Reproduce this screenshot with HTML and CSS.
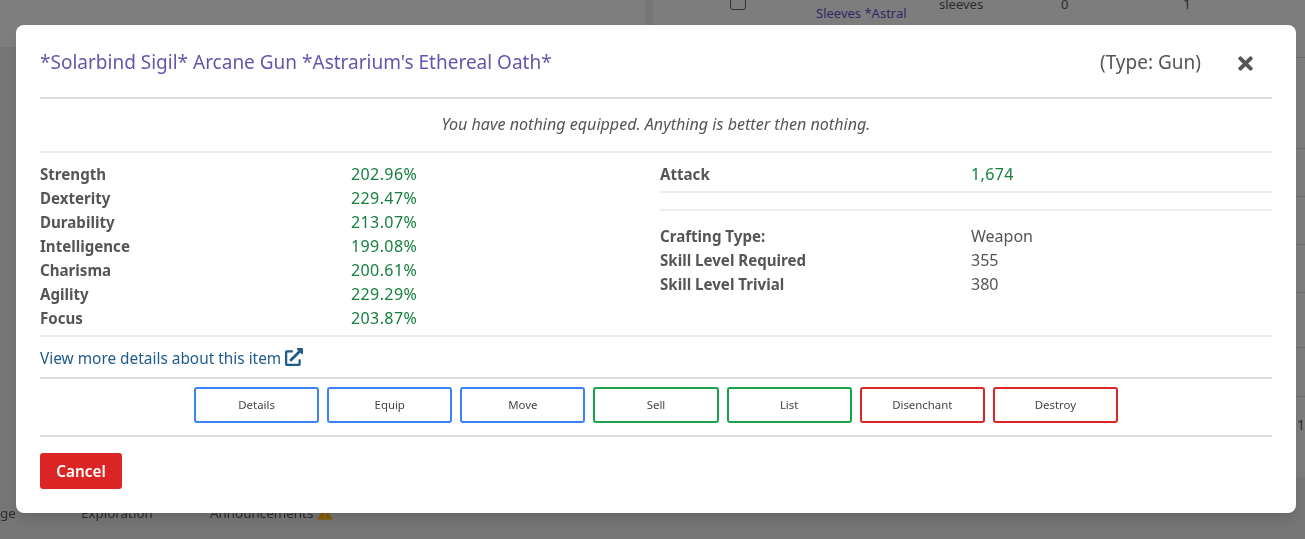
FILE: index.html
```html
<!DOCTYPE html>
<html lang="en">
<head>
<meta charset="utf-8">
<title>Item</title>
<link rel="stylesheet" href="styles.css">
</head>
<body>
<div class="page">
  <div class="bg-top"></div>
  <div class="bg-panel">
    <div class="bg-row r1"></div>
    <div class="bg-row r2"></div>
    <div class="bg-row r3"></div>
    <div class="bg-row r3"></div>
    <div class="bg-row r3"></div>
    <div class="bg-row r4"></div>
    <div class="bg-row r5"></div>
  </div>
  <span class="bg-check"></span>
  <span class="bg-text bg-link">Sleeves *Astral</span>
  <span class="bg-text bg-sleeves">sleeves</span>
  <span class="bg-text bg-zero">0</span>
  <span class="bg-text bg-one">1</span>
  <span class="bg-text bg-edge">10</span>
  <span class="bg-text bg-ge">ge</span>
  <span class="bg-text bg-explore">Exploration</span>
  <span class="bg-text bg-announce">Announcements
    <svg class="bg-warn" viewBox="0 0 16 14"><path d="M8 0.5 L15.6 13.5 H0.4 Z" fill="#8a5a00"/><rect x="7.2" y="5" width="1.6" height="4.5" fill="#777"/><rect x="7.2" y="10.5" width="1.6" height="1.6" fill="#777"/></svg>
  </span>
</div>
<section class="modal">
  <header class="modal-head">
    <h2 class="title">*Solarbind Sigil* Arcane Gun *Astrarium's Ethereal Oath*</h2>
    <span class="type">(Type: Gun)</span>
    <svg class="close" viewBox="0 0 352 512"><path fill="currentColor" d="M242.72 256l100.07-100.07c12.28-12.28 12.28-32.19 0-44.48l-22.24-22.24c-12.28-12.28-32.19-12.28-44.48 0L176 189.28 75.93 89.21c-12.28-12.28-32.19-12.28-44.48 0L9.21 111.45c-12.28 12.28-12.28 32.19 0 44.48L109.28 256 9.21 356.07c-12.28 12.28-12.28 32.19 0 44.48l22.24 22.24c12.28 12.28 32.2 12.28 44.48 0L176 322.72l100.07 100.07c12.28 12.28 32.2 12.28 44.48 0l22.24-22.24c12.28-12.28 12.28-32.19 0-44.48L242.72 256z"/></svg>
  </header>
  <hr class="rule rule-strong">
  <p class="note">You have nothing equipped. Anything is better then nothing.</p>
  <hr class="rule">
  <div class="columns">
    <dl class="stats">
      <dt>Strength</dt><dd class="good">202.96%</dd>
      <dt>Dexterity</dt><dd class="good">229.47%</dd>
      <dt>Durability</dt><dd class="good">213.07%</dd>
      <dt>Intelligence</dt><dd class="good">199.08%</dd>
      <dt>Charisma</dt><dd class="good">200.61%</dd>
      <dt>Agility</dt><dd class="good">229.29%</dd>
      <dt>Focus</dt><dd class="good">203.87%</dd>
    </dl>
    <div>
      <dl class="stats">
        <dt>Attack</dt><dd class="good">1,674</dd>
      </dl>
      <hr class="rule rule-a">
      <hr class="rule rule-b">
      <dl class="stats">
        <dt>Crafting Type:</dt><dd>Weapon</dd>
        <dt>Skill Level Required</dt><dd>355</dd>
        <dt>Skill Level Trivial</dt><dd>380</dd>
      </dl>
    </div>
  </div>
  <hr class="rule">
  <a class="more" href="#">View more details about this item
    <svg class="ext" viewBox="0 0 512 512"><path fill="currentColor" d="M432 320h-32a16 16 0 0 0-16 16v112H64V128h144a16 16 0 0 0 16-16V80a16 16 0 0 0-16-16H48a48 48 0 0 0-48 48v352a48 48 0 0 0 48 48h352a48 48 0 0 0 48-48V336a16 16 0 0 0-16-16zM488 0H360c-21.37 0-32.05 25.91-17 41l35.73 35.73L135 320.37a24 24 0 0 0 0 34L157.67 377a24 24 0 0 0 34 0l243.61-243.68L471 169c15 15 41 4.5 41-17V24a24 24 0 0 0-24-24z"/></svg>
  </a>
  <hr class="rule rule-strong">
  <div class="actions">
    <button class="act blue">Details</button>
    <button class="act blue">Equip</button>
    <button class="act blue">Move</button>
    <button class="act green">Sell</button>
    <button class="act green">List</button>
    <button class="act red">Disenchant</button>
    <button class="act red">Destroy</button>
  </div>
  <hr class="rule rule-strong">
  <button class="cancel">Cancel</button>
</section>
</body>
</html>
```
FILE: styles.css
```css
* { box-sizing: border-box; }
html, body { margin: 0; height: 100%; }
body {
  background: #767676;
  font-family: "Noto Sans", sans-serif;
  font-size: 16px;
  color: #555;
  overflow: hidden;
}
.page { position: fixed; inset: 0; overflow: hidden; }
.bg-top { position: absolute; left: 0; top: 0; width: 645px; height: 47px; background: #7e7e7e; }
.bg-panel { position: absolute; left: 652px; top: 0; width: 653px; height: 477px; background: #7d7d7d; border-left: 1px solid #757575; }
.bg-row { border-bottom: 1px solid #6c6c6c; }
.r1 { height: 58px; }
.r2 { height: 91px; }
.r3 { height: 48px; }
.r4 { height: 55px; }
.r5 { height: 49px; }
.bg-text { position: absolute; font-size: 13px; line-height: 20px; color: #2c2c2c; white-space: nowrap; }
.bg-check { position: absolute; left: 730px; top: -6px; width: 16px; height: 16px; border: 1px solid #333; border-radius: 3px; }
.bg-link { left: 816px; top: 3px; color: #322a63; }
.bg-sleeves { left: 939px; top: -6px; }
.bg-zero { left: 1061px; top: -6px; }
.bg-one { left: 1183px; top: -6px; font-size: 14px; }
.bg-edge { left: 1297px; top: 415px; font-size: 14px; }
.bg-ge { left: 0; top: 503px; font-size: 13.4px; }
.bg-explore { left: 81px; top: 503px; font-size: 13.4px; }
.bg-announce { left: 210px; top: 503px; font-size: 13.4px; }
.bg-warn { width: 16px; height: 14px; vertical-align: -2px; }

.modal {
  position: absolute;
  left: 16px; top: 25px;
  width: 1280px; height: 488px;
  padding: 0 24px;
  background: #fff;
  border-radius: 8px;
  box-shadow: 0 10px 15px -3px rgba(0,0,0,.1), 0 4px 6px -2px rgba(0,0,0,.05);
}
.modal-head { display: flex; align-items: center; height: 72px; padding-top: 2px; }
.title { flex: 1; margin: 0; font-size: 19px; font-weight: 400; color: #6655ab; }
.type { font-size: 19px; color: #555; }
.close { width: 15px; height: 21px; margin: 2px 19px 0 37px; color: #555; }
.rule { margin: 0; border: 0; height: 2px; background: #eee; }
.rule-strong { background: #ddd; }
.note { margin: 0; height: 52px; padding-bottom: 2px; display: flex; align-items: center; justify-content: center; font-style: italic; font-size: 16.1px; color: #555; }
.columns { display: grid; grid-template-columns: 612px 612px; column-gap: 8px; padding-top: 9px; height: 182px; align-items: start; }
.stats { display: grid; grid-template-columns: 301px 301px; column-gap: 10px; margin: 0; line-height: 24px; font-size: 16px; }
.stats dt { font-weight: 700; font-size: 15.1px; }
.stats dd { margin: 0; }
.stats .good { color: #15803d; letter-spacing: .4px; }
.rule-a { margin-top: 5px; }
.rule-b { margin-top: 16px; margin-bottom: 13px; }
.more { display: flex; align-items: center; gap: 4px; height: 40px; padding-top: 2px; font-size: 15.4px; color: #1e5a8c; text-decoration: none; }
.ext { width: 18px; height: 18px; margin-top: -2px; }
.actions { display: flex; justify-content: center; gap: 8px; padding-top: 8px; height: 56px; }
.act {
  width: 125.15px; height: 36px; padding: 0 0 2px;
  background: #fff;
  border: 2px solid;
  border-radius: 3px;
  font-family: inherit; font-size: 11.4px;
  color: #444;
}
.blue { border-color: #3b82f6; }
.green { border-color: #16a34a; }
.red { border-color: #dc2626; }
.cancel {
  display: block;
  margin-top: 16px;
  width: 82px; height: 36px; padding: 0 0 1px;
  background: #dc2626; color: #fff;
  border: 0; border-radius: 3px;
  font-family: inherit; font-size: 15.3px; font-weight: 600;
}
```
